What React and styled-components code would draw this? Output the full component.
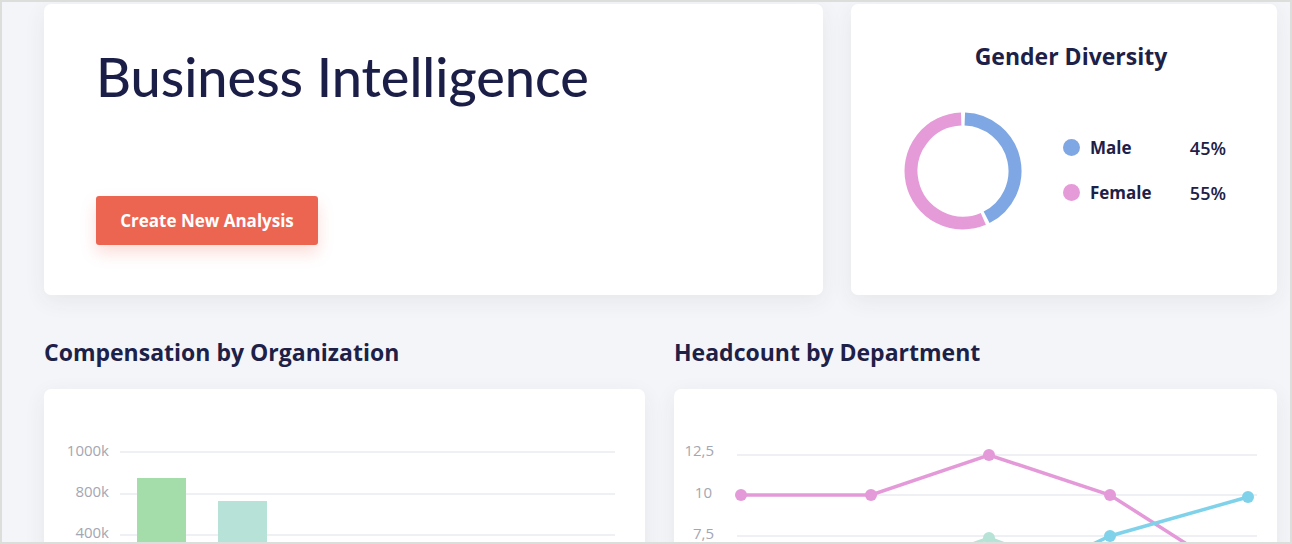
import React from 'react';
import styled, { createGlobalStyle } from 'styled-components';

const GlobalStyle = createGlobalStyle`
    html, body {
        margin: 0;
        padding: 0;
        background: #f4f5f8;
    }
    * {
        box-sizing: border-box;
    }
`;

const Frame = styled.div`
    width: 1292px;
    height: 544px;
    overflow: hidden;
    border: 2px solid #dcdedb;
    background: #f4f5f8;
    padding: 2px 13px 0 42px;
    font-family: 'Open Sans', 'Liberation Sans', sans-serif;
    color: #1e2147;
`;

const TopRow = styled.div`
    display: grid;
    grid-template-columns: 779px 426px;
    gap: 28px;
`;

const Card = styled.div`
    background: #ffffff;
    border-radius: 7px;
    box-shadow: 0 6px 22px rgba(40, 50, 90, 0.07);
    height: ${(p) => p.height || 'auto'};
`;

const HeroCard = styled(Card)`
    padding: 40px 52px 0;
    display: flex;
    flex-direction: column;
    align-items: flex-start;
`;

const Title = styled.h1`
    margin: 0;
    font-family: 'Lato', 'Liberation Sans', sans-serif;
    font-size: 54px;
    font-weight: 500;
    line-height: 66px;
    color: #1b1f48;
`;

const PrimaryButton = styled.button`
    margin-top: 86px;
    width: 222px;
    height: 49px;
    border: none;
    border-radius: 3px;
    background: #ec6551;
    color: #ffffff;
    font-family: inherit;
    font-size: 17px;
    font-weight: 700;
    box-shadow: 0 8px 16px rgba(236, 101, 81, 0.22);
    cursor: pointer;
`;

const DiversityCard = styled(Card)`
    padding: 37px 0 0 14px;
    display: flex;
    flex-direction: column;
    align-items: center;
`;

const CardTitle = styled.h2`
    margin: 0;
    font-size: 23px;
    font-weight: 700;
    line-height: 30px;
    color: #1e2147;
`;

const DonutRow = styled.div`
    display: flex;
    align-items: center;
    gap: 41px;
    margin-top: 41px;
    margin-left: -12px;
`;

const Legend = styled.ul`
    list-style: none;
    margin: 0 0 2px;
    padding: 0;
    display: flex;
    flex-direction: column;
    gap: 23px;
`;

const LegendItem = styled.li`
    display: grid;
    grid-template-columns: 17px 78px 48px;
    align-items: center;
    column-gap: 10px;
    font-size: 17px;
    line-height: 22px;
`;

const Dot = styled.span`
    width: 17px;
    height: 17px;
    border-radius: 50%;
    background: ${(p) => p.color};
`;

const LegendLabel = styled.span`
    font-weight: 700;
`;

const LegendValue = styled.span`
    font-size: 18px;
    font-weight: 600;
    text-align: right;
`;

const SectionRow = styled.div`
    display: grid;
    grid-template-columns: 601px 603px;
    gap: 29px;
    margin-top: 43px;
`;

const Section = styled.section`
    display: flex;
    flex-direction: column;
    gap: 23px;
`;

const SectionTitle = styled.h3`
    margin: 0;
    font-size: 23px;
    font-weight: 700;
    line-height: 28px;
    color: #1e2147;
`;

const ChartCard = styled(Card)`
    height: 200px;
    overflow: hidden;
`;

const AxisLabel = styled.text`
    font-family: 'Open Sans', 'Liberation Sans', sans-serif;
    font-size: 15px;
    fill: #a4a6b3;
`;

const arc = (cx, cy, r, a0, a1) => {
    const p = (a) => {
        const rad = ((a - 90) * Math.PI) / 180;
        return [cx + r * Math.cos(rad), cy + r * Math.sin(rad)];
    };
    const [x0, y0] = p(a0);
    const [x1, y1] = p(a1);
    const large = a1 - a0 > 180 ? 1 : 0;
    return `M ${x0} ${y0} A ${r} ${r} 0 ${large} 1 ${x1} ${y1}`;
};

const Donut = () => (
    <svg width="118" height="118" viewBox="0 0 118 118">
        <path d={arc(59, 59, 52, 2, 153)} fill="none" stroke="#7fa7e3" strokeWidth="13" />
        <path d={arc(59, 59, 52, 157, 358)} fill="none" stroke="#e69bd9" strokeWidth="13" />
    </svg>
);

const BarChart = () => (
    <svg width="601" height="200">
        {[63, 105, 146].map((y) => (
            <line key={y} x1="76" x2="571" y1={y} y2={y} stroke="#eef0f4" strokeWidth="2" />
        ))}
        <AxisLabel x="65" y="67" textAnchor="end">1000k</AxisLabel>
        <AxisLabel x="65" y="108" textAnchor="end">800k</AxisLabel>
        <AxisLabel x="65" y="149" textAnchor="end">400k</AxisLabel>
        <rect x="93" y="89" width="49" height="120" fill="#a4dcaa" />
        <rect x="174" y="112" width="49" height="100" fill="#b6e2d7" />
    </svg>
);

const series = [
    { color: '#e49ad8', points: [[67, 106], [197, 106], [315, 66], [436, 106], [580, 198]] },
    { color: '#b6e3d5', points: [[197, 192], [315, 149], [436, 195]] },
    { color: '#7fd2ea', points: [[315, 204], [436, 147], [574, 108]] },
];

const LineChart = () => (
    <svg width="603" height="200">
        {[66, 106, 147].map((y) => (
            <line key={y} x1="63" x2="583" y1={y} y2={y} stroke="#eef0f4" strokeWidth="2" />
        ))}
        <AxisLabel x="40" y="67" textAnchor="end">12,5</AxisLabel>
        <AxisLabel x="38" y="109" textAnchor="end">10</AxisLabel>
        <AxisLabel x="40" y="150" textAnchor="end">7,5</AxisLabel>
        {series.map((s) => (
            <g key={s.color}>
                <polyline
                    points={s.points.map((pt) => pt.join(',')).join(' ')}
                    fill="none"
                    stroke={s.color}
                    strokeWidth="3.5"
                />
                {s.points.map(([x, y]) => (
                    <circle key={x} cx={x} cy={y} r="6" fill={s.color} />
                ))}
            </g>
        ))}
    </svg>
);

const App = () => (
    <Frame>
        <GlobalStyle />
        <TopRow>
            <HeroCard height="291px">
                <Title>Business Intelligence</Title>
                <PrimaryButton>Create New Analysis</PrimaryButton>
            </HeroCard>
            <DiversityCard height="291px">
                <CardTitle>Gender Diversity</CardTitle>
                <DonutRow>
                    <Donut />
                    <Legend>
                        <LegendItem>
                            <Dot color="#7fa7e3" />
                            <LegendLabel>Male</LegendLabel>
                            <LegendValue>45%</LegendValue>
                        </LegendItem>
                        <LegendItem>
                            <Dot color="#e69bd9" />
                            <LegendLabel>Female</LegendLabel>
                            <LegendValue>55%</LegendValue>
                        </LegendItem>
                    </Legend>
                </DonutRow>
            </DiversityCard>
        </TopRow>
        <SectionRow>
            <Section>
                <SectionTitle>Compensation by Organization</SectionTitle>
                <ChartCard>
                    <BarChart />
                </ChartCard>
            </Section>
            <Section>
                <SectionTitle>Headcount by Department</SectionTitle>
                <ChartCard>
                    <LineChart />
                </ChartCard>
            </Section>
        </SectionRow>
    </Frame>
);

export default App;
